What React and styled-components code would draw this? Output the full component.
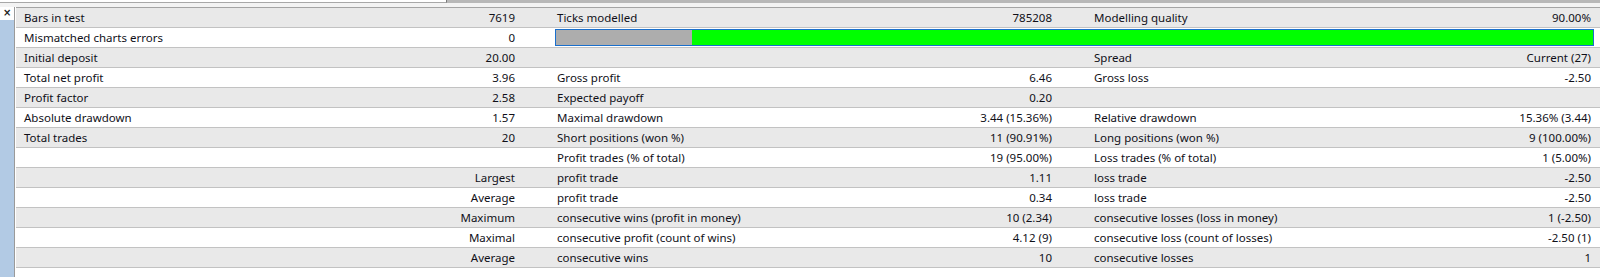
import React from "react";
import styled, { createGlobalStyle } from "styled-components";

const COLORS = {
  text: "#101018",
  rowAlt: "#e9e9e9",
  line: "#c2c2c2",
  strip: "#b2cae4",
  barBorder: "#1a6fcc",
  barGray: "#adadad",
  barGreen: "#00ff00",
};

const GlobalStyle = createGlobalStyle`
  html, body {
    margin: 0;
    padding: 0;
    background: #ffffff;
  }
  body {
    font-family: "Noto Sans", "Open Sans", sans-serif;
    font-size: 11.5px;
    color: ${COLORS.text};
  }
`;

const rows = [
  { cells: ["Bars in test", "7619", "Ticks modelled", "785208", "Modelling quality", "90.00%"] },
  { cells: ["Mismatched charts errors", "0"], bar: 136 },
  { cells: ["Initial deposit", "20.00", "", "", "Spread", "Current (27)"] },
  { cells: ["Total net profit", "3.96", "Gross profit", "6.46", "Gross loss", "-2.50"] },
  { cells: ["Profit factor", "2.58", "Expected payoff", "0.20", "", ""] },
  { cells: ["Absolute drawdown", "1.57", "Maximal drawdown", "3.44 (15.36%)", "Relative drawdown", "15.36% (3.44)"] },
  { cells: ["Total trades", "20", "Short positions (won %)", "11 (90.91%)", "Long positions (won %)", "9 (100.00%)"] },
  { caption: "", cells: ["Profit trades (% of total)", "19 (95.00%)", "Loss trades (% of total)", "1 (5.00%)"] },
  { caption: "Largest", cells: ["profit trade", "1.11", "loss trade", "-2.50"] },
  { caption: "Average", cells: ["profit trade", "0.34", "loss trade", "-2.50"] },
  { caption: "Maximum", cells: ["consecutive wins (profit in money)", "10 (2.34)", "consecutive losses (loss in money)", "1 (-2.50)"] },
  { caption: "Maximal", cells: ["consecutive profit (count of wins)", "4.12 (9)", "consecutive loss (count of losses)", "-2.50 (1)"] },
  { caption: "Average", cells: ["consecutive wins", "10", "consecutive losses", "1"] },
];

const Report = () => (
  <Frame>
    <GlobalStyle />
    <TopBar>
      <Tab />
      <TabRest />
    </TopBar>
    <Body>
      <Side>
        <Close>×</Close>
        <Strip />
      </Side>
      <Divider />
      <Table>
        {rows.map((row, i) => {
          const split = row.caption !== undefined;
          const rest = split ? row.cells : row.cells.slice(2);
          return (
            <Row key={i} $alt={i % 2 === 0}>
              <Group $w={533}>
                {split ? (
                  <Caption>{row.caption}</Caption>
                ) : (
                  <>
                    <Label>{row.cells[0]}</Label>
                    <Value>{row.cells[1]}</Value>
                  </>
                )}
              </Group>
              {row.bar ? (
                <BarCell>
                  <Bar>
                    <BarFill style={{ width: row.bar }} />
                    <BarGreen />
                  </Bar>
                </BarCell>
              ) : (
                <>
                  <Group $w={537}>
                    <Label>{rest[0]}</Label>
                    <Value>{rest[1]}</Value>
                  </Group>
                  <Group $w={514} $last>
                    <Label>{rest[2]}</Label>
                    <Value>{rest[3]}</Value>
                  </Group>
                </>
              )}
            </Row>
          );
        })}
      </Table>
    </Body>
  </Frame>
);

export default function App() {
  return <Report />;
}

const Frame = styled.div`
  width: 1600px;
  height: 277px;
  display: flex;
  flex-direction: column;
  overflow: hidden;
  background: #ffffff;
`;

const TopBar = styled.div`
  display: flex;
  height: 7px;
  background: #f3f3f3;
  flex-shrink: 0;
`;

const Tab = styled.div`
  width: 446px;
  height: 2px;
  background: #ffffff;
  border-bottom: 1px solid #a8a8a8;
  border-right: 1px solid #7a7a7a;
`;

const TabRest = styled.div`
  flex: 1;
  height: 3px;
  background: #b8b8b8;
`;

const Body = styled.div`
  flex: 1;
  display: flex;
`;

const Side = styled.div`
  width: 14px;
  display: flex;
  flex-direction: column;
`;

const Close = styled.div`
  height: 13px;
  font-family: "DejaVu Sans", sans-serif;
  font-size: 10px;
  font-weight: bold;
  line-height: 11px;
  padding-left: 3px;
  color: #202020;
`;

const Strip = styled.div`
  flex: 1;
  background: ${COLORS.strip};
`;

const Divider = styled.div`
  width: 1px;
  margin-right: 1px;
  background: #9a9a9a;
`;

const Table = styled.div`
  flex: 1;
  border-top: 1px solid #a4a4a4;
  align-self: flex-start;
`;

const Row = styled.div`
  display: flex;
  height: 19px;
  border-bottom: 1px solid ${COLORS.line};
  background: ${(p) => (p.$alt ? COLORS.rowAlt : "#ffffff")};
`;

const Group = styled.div`
  width: ${(p) => p.$w}px;
  flex-shrink: 0;
  display: flex;
  align-items: center;
  justify-content: space-between;
  padding: 0 ${(p) => (p.$last ? 9 : 34)}px 0 8px;
  box-sizing: border-box;
  white-space: nowrap;
`;

const Label = styled.span``;

const Value = styled.span`
  text-align: right;
`;

const Caption = styled.span`
  margin-left: auto;
`;

const BarCell = styled.div`
  flex: 1;
  display: flex;
  align-items: center;
  padding: 0 6px 0 6px;
`;

const Bar = styled.div`
  flex: 1;
  height: 15px;
  display: flex;
  border: 1px solid ${COLORS.barBorder};
`;

const BarFill = styled.div`
  background: ${COLORS.barGray};
`;

const BarGreen = styled.div`
  flex: 1;
  background: ${COLORS.barGreen};
`;
